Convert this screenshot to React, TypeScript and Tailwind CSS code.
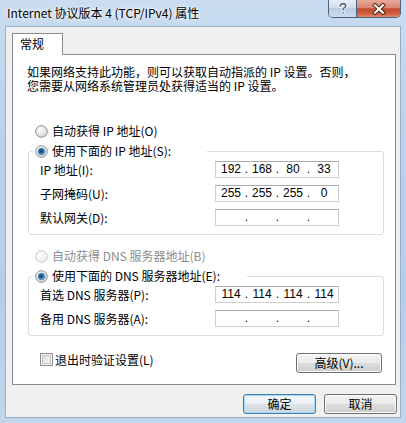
import React from 'react';

const cjk = "font-['Noto_Sans_CJK_SC','Noto_Sans',sans-serif]";

function Radio({ checked = false, disabled = false }: { checked?: boolean; disabled?: boolean }) {
  const id = checked ? 'rc' : disabled ? 'rd' : 'ru';
  return (
    <svg width="13" height="13" viewBox="0 0 13 13" className="shrink-0">
      <defs>
        <radialGradient id={`${id}-f`} cx="40%" cy="35%" r="70%">
          <stop offset="0%" stopColor="#ffffff" />
          <stop offset="100%" stopColor={disabled ? '#ececec' : '#d2d2d2'} />
        </radialGradient>
        <radialGradient id={`${id}-d`} cx="45%" cy="45%" r="60%">
          <stop offset="0%" stopColor="#0d3a68" />
          <stop offset="55%" stopColor="#2a6fb0" />
          <stop offset="100%" stopColor="#8fd0f6" />
        </radialGradient>
      </defs>
      <circle cx="6.5" cy="6.5" r="5.8" fill={`url(#${id}-f)`} stroke={disabled ? '#c7c7c7' : '#8e8f8f'} strokeWidth="1" />
      {checked && <circle cx="6.5" cy="6.5" r="3.3" fill={`url(#${id}-d)`} stroke="#2b5f92" strokeWidth="0.6" />}
    </svg>
  );
}

function Checkbox() {
  return (
    <svg width="13" height="13" viewBox="0 0 13 13" className="shrink-0">
      <defs>
        <linearGradient id="cb-f" x1="0" y1="0" x2="1" y2="1">
          <stop offset="0%" stopColor="#d9d9d9" />
          <stop offset="100%" stopColor="#fbfbfb" />
        </linearGradient>
      </defs>
      <rect x="0.5" y="0.5" width="12" height="12" fill="#f4f4f4" stroke="#8e8f8f" />
      <rect x="2.5" y="2.5" width="8" height="8" fill="url(#cb-f)" stroke="#c4c4c4" />
    </svg>
  );
}

function IpBox({ parts }: { parts: string[] }) {
  return (
    <div className="flex h-[17px] w-[124px] shrink-0 items-center border border-[#cfcfcf] border-t-[#a9a9a9] bg-white pl-[2px] font-['Liberation_Sans',sans-serif] text-[12px] leading-[15px] text-black">
      {parts.map((p, i) => (
        <React.Fragment key={i}>
          <span className="w-[26px] text-center">{p}</span>
          {i < 3 && <span className="w-[5px] text-center">.</span>}
        </React.Fragment>
      ))}
    </div>
  );
}

function Row({ label, parts }: { label: string; parts: string[] }) {
  return (
    <div className="flex h-[17px] items-center pl-[11px]">
      <span className="w-[175px] whitespace-nowrap text-[12px] leading-[14px]">{label}</span>
      <IpBox parts={parts} />
    </div>
  );
}

function Group({ legend, legendWidth, children }: { legend: string; legendWidth: string; children: React.ReactNode }) {
  return (
    <fieldset className="ml-[15px] mt-[4px] w-[356px] rounded-[3px] border border-[#d5dfe5] pb-[8px] pt-[2px]">
      <legend className={`ml-[4px] ${legendWidth}`}>
        <div className="flex h-[16px] items-center gap-[4px] whitespace-nowrap pl-[2px]">
          <Radio checked />
          <span className="text-[12px] leading-[14px]">{legend}</span>
        </div>
      </legend>
      <div className="flex flex-col gap-[7px]">{children}</div>
    </fieldset>
  );
}

function WinButton({ label, primary = false, className = '' }: { label: string; primary?: boolean; className?: string }) {
  return (
    <button
      type="button"
      className={`flex items-center justify-center rounded-[3px] border text-[12px] leading-[14px] text-black ${
        primary
          ? 'border-[#3c7fb1] bg-[linear-gradient(#f2f6f9_0%,#ebf0f4_50%,#dde3e8_50%,#ced6dd_100%)] shadow-[inset_0_0_0_1px_#a5d9f7]'
          : 'border-[#707070] bg-[linear-gradient(#f2f2f2_0%,#ebebeb_50%,#dddddd_50%,#cfcfcf_100%)] shadow-[inset_0_0_0_1px_#fbfbfb]'
      } ${className}`}
    >
      {label}
    </button>
  );
}

export default function App() {
  return (
    <div className={`flex h-[423px] w-[406px] flex-col overflow-hidden bg-[linear-gradient(180deg,#c9dcf0_0%,#bcd2eb_30%,#b6cde8_70%,#c2d6ec_100%)] text-black ${cjk}`}>
      {/* title bar */}
      <div className="flex h-[26px] shrink-0 items-start">
        <span className="pl-[7px] pt-[5px] text-[12px] leading-[16px] text-black [text-shadow:0_0_6px_#ffffff,0_0_3px_#ffffff]">
          Internet 协议版本 4 (TCP/IPv4) 属性
        </span>
        <div className="ml-auto mr-[5px] flex h-[18px] overflow-hidden rounded-b-[5px] border border-t-0 border-[#4f6380]">
          <div className="flex w-[28px] items-center justify-center border-r border-[#4f6380] bg-[linear-gradient(#e7eef7_0%,#cfdcec_50%,#b9cbe1_50%,#cddbec_100%)]">
            <svg width="12" height="13" viewBox="0 0 12 13">
              <path d="M3.2 4.3C3.2 2.6 4.5 1.6 6 1.6S8.8 2.5 8.8 3.9C8.8 5.6 6 5.8 6 8" fill="none" stroke="#ffffff" strokeWidth="3.2" strokeLinecap="round" />
              <path d="M3.2 4.3C3.2 2.6 4.5 1.6 6 1.6S8.8 2.5 8.8 3.9C8.8 5.6 6 5.8 6 8" fill="none" stroke="#55677f" strokeWidth="1.6" strokeLinecap="round" />
              <circle cx="6" cy="10.8" r="1.6" fill="#ffffff" />
              <circle cx="6" cy="10.8" r="0.9" fill="#55677f" />
            </svg>
          </div>
          <div className="flex w-[43px] items-center justify-center bg-[linear-gradient(#e9a99a_0%,#d98670_45%,#c24a2c_52%,#cf5f42_80%,#e08a6e_100%)]">
            <svg width="14" height="12" viewBox="0 0 14 12">
              <path d="M3 2.2L11 9.8M11 2.2L3 9.8" stroke="#4a1a10" strokeWidth="4" strokeLinecap="square" />
              <path d="M3 2.2L11 9.8M11 2.2L3 9.8" stroke="#ffffff" strokeWidth="2.2" strokeLinecap="square" />
            </svg>
          </div>
        </div>
      </div>

      {/* client area */}
      <div className="ml-[5px] flex h-[392px] w-[396px] flex-col border border-[#98adc8] bg-[#f0f0f0]">
        {/* tab */}
        <div className="relative z-10 ml-[6px] mt-[6px] flex h-[22px] w-[51px] items-start border border-b-0 border-[#898c95] bg-white pl-[7px] pt-[3px] text-[12px] leading-[14px]">
          常规
        </div>

        {/* tab page */}
        <div className="-mt-[1px] ml-[6px] flex h-[331px] w-[384px] flex-col border border-[#898c95] bg-white">
          <p className="whitespace-nowrap pl-[14px] pt-[10px] text-[12px] leading-[14px]">
            如果网络支持此功能，则可以获取自动指派的 IP 设置。否则，
            <br />
            您需要从网络系统管理员处获得适当的 IP 设置。
          </p>

          <div className="mt-[30px] flex h-[16px] items-center gap-[4px] pl-[22px]">
            <Radio />
            <span className="text-[12px] leading-[14px]">自动获得 IP 地址(O)</span>
          </div>
          <Group legend="使用下面的 IP 地址(S):" legendWidth="w-[174px]">
            <Row label="IP 地址(I):" parts={['192', '168', '80', '33']} />
            <Row label="子网掩码(U):" parts={['255', '255', '255', '0']} />
            <Row label="默认网关(D):" parts={['', '', '', '']} />
          </Group>

          <div className="mt-[13px] flex h-[16px] items-center gap-[4px] pl-[22px]">
            <Radio disabled />
            <span className="whitespace-nowrap text-[12px] leading-[14px] text-[#8c8c8c]">自动获得 DNS 服务器地址(B)</span>
          </div>
          <Group legend="使用下面的 DNS 服务器地址(E):" legendWidth="w-[214px]">
            <Row label="首选 DNS 服务器(P):" parts={['114', '114', '114', '114']} />
            <Row label="备用 DNS 服务器(A):" parts={['', '', '', '']} />
          </Group>

          <div className="mt-[17px] flex items-start justify-between pl-[27px] pr-[13px]">
            <div className="flex h-[13px] items-center gap-[2px]">
              <Checkbox />
              <span className="text-[12px] leading-[14px]">退出时验证设置(L)</span>
            </div>
            <WinButton label="高级(V)..." className="h-[20px] w-[86px]" />
          </div>
        </div>

        {/* dialog buttons */}
        <div className="mt-[9px] flex justify-end gap-[8px] pr-[3px]">
          <WinButton label="确定" primary className="h-[20px] w-[73px]" />
          <WinButton label="取消" className="h-[20px] w-[73px]" />
        </div>
      </div>
    </div>
  );
}
